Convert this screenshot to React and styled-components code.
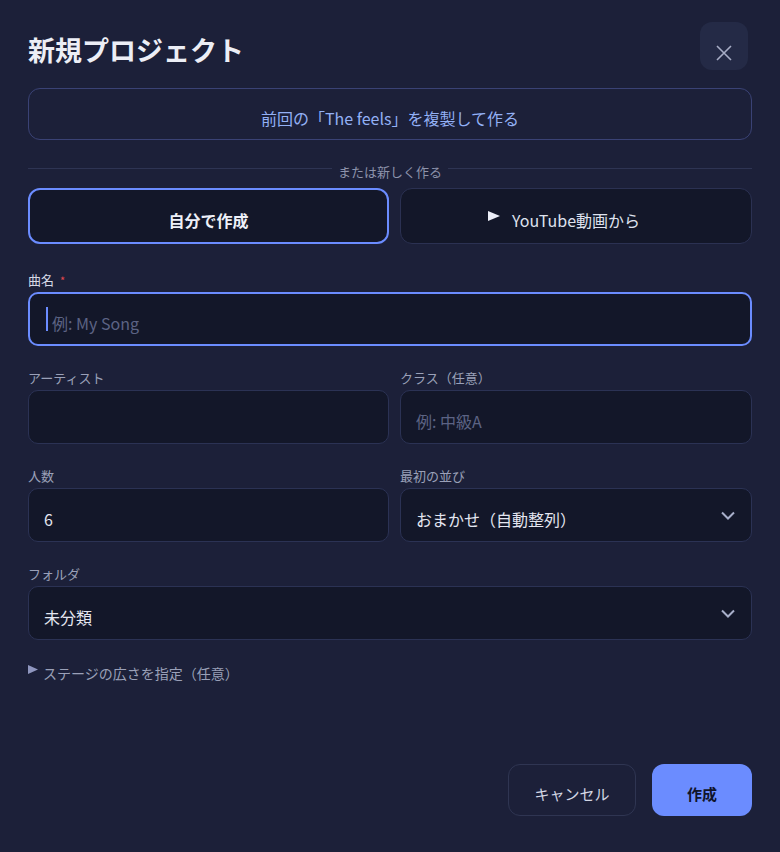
import React from 'react';
import styled, { createGlobalStyle } from 'styled-components';

const GlobalStyle = createGlobalStyle`
  * {
    box-sizing: border-box;
  }

  body {
    margin: 0;
    background: #1c2039;
    color: #e4e6f0;
    font-family: "Noto Sans CJK JP", "Noto Sans", sans-serif;
  }
`;

const Dialog = styled.div`
  display: flex;
  flex-direction: column;
  min-height: 100vh;
  padding: 22px 28px 36px;
`;

const Header = styled.header`
  align-items: flex-start;
  display: flex;
  justify-content: space-between;
`;

const Title = styled.h1`
  color: #eceef6;
  font-size: 27px;
  font-weight: 700;
  line-height: 34px;
  margin: 11px 0 0;
`;

const CloseButton = styled.button`
  align-items: center;
  background: #242a46;
  border: none;
  border-radius: 12px;
  color: #a7adc6;
  cursor: pointer;
  display: flex;
  height: 48px;
  justify-content: center;
  margin-right: 4px;
  padding: 13px 0 0;
  width: 48px;
`;

const CloneButton = styled.button`
  align-items: center;
  background: transparent;
  border: 1px solid #3a4275;
  border-radius: 12px;
  color: #93b0f5;
  cursor: pointer;
  display: flex;
  font-family: inherit;
  font-size: 16px;
  height: 52px;
  justify-content: center;
  margin-top: 18px;
  padding: 0;
  width: 100%;
`;

// text sits a few pixels under the middle of its box
const Shifted = styled.span`
  line-height: ${({ $lh }) => $lh || 20}px;
  padding-top: 8px;
`;

const Divider = styled.div`
  align-items: center;
  color: #8d93ab;
  display: flex;
  font-size: 13px;
  gap: 6px;
  margin-top: 15px;

  &::before,
  &::after {
    background: #2e3453;
    content: "";
    flex: 1;
    height: 1px;
  }
`;

const Columns = styled.div`
  column-gap: 11px;
  display: grid;
  grid-template-columns: 361fr 352fr;
`;

const ModeRow = styled(Columns)`
  margin-top: 7px;
`;

const ModeButton = styled.button`
  align-items: center;
  background: #131729;
  border: ${({ $active }) => ($active ? '2px solid #6b8cff' : '1px solid #2b3152')};
  border-radius: 12px;
  color: ${({ $active }) => ($active ? '#eef0f8' : '#dfe2ee')};
  cursor: pointer;
  display: flex;
  font-family: inherit;
  font-size: 16px;
  font-weight: ${({ $active }) => ($active ? 700 : 400)};
  gap: 12px;
  height: 56px;
  justify-content: center;
  padding: 0 ${({ $withIcon }) => ($withIcon ? 24 : 0)}px 0 0;
`;

const Form = styled.div`
  display: flex;
  flex-direction: column;
  gap: 23px;
  margin-top: 27px;
`;

const Field = styled.label`
  display: flex;
  flex-direction: column;
`;

const Label = styled.span`
  color: ${({ $strong }) => ($strong ? '#d6d9e6' : '#9aa0b8')};
  font-size: 13px;
  line-height: 18px;
  margin-bottom: 3px;
`;

const Required = styled.span`
  color: #e5484d;
  font-size: 11px;
  margin-left: 6px;
  vertical-align: top;
`;

const Input = styled.input`
  background: #131729;
  border: 1px solid #2b3254;
  border-radius: 10px;
  color: #e4e6f0;
  font-family: inherit;
  font-size: 16px;
  height: 54px;
  outline: none;
  padding: 8px 15px 0;
  width: 100%;

  &::placeholder {
    color: #5c6384;
  }
`;

const FocusBox = styled.div`
  align-items: center;
  background: #131729;
  border: 2px solid #6b8cff;
  border-radius: 10px;
  display: flex;
  height: 54px;
  padding: 0 16px;
`;

const Caret = styled.span`
  background: #6b8cff;
  height: 24px;
  margin-right: 4px;
  width: 2px;
`;

const Placeholder = styled(Shifted)`
  color: #5c6384;
  font-size: 16px;
`;

const Select = styled.div`
  align-items: center;
  background: #131729;
  border: 1px solid #2b3254;
  border-radius: 10px;
  color: #e4e6f0;
  display: flex;
  font-size: 16px;
  height: 54px;
  justify-content: space-between;
  padding: 0 16px 0 15px;
`;

const Details = styled.div`
  align-items: center;
  color: #9aa0b8;
  display: flex;
  font-size: 14px;
  gap: 5px;
  margin-top: -8px;
`;

const Footer = styled.footer`
  display: flex;
  gap: 16px;
  justify-content: flex-end;
  margin-top: auto;
`;

const FooterButton = styled.button`
  align-items: center;
  background: ${({ $primary }) => ($primary ? '#6b8cff' : 'transparent')};
  border: ${({ $primary }) => ($primary ? 'none' : '1px solid #2f3552')};
  border-radius: 12px;
  color: ${({ $primary }) => ($primary ? '#10142a' : '#d2d6e4')};
  cursor: pointer;
  display: flex;
  font-family: inherit;
  font-size: 15px;
  font-weight: ${({ $primary }) => ($primary ? 700 : 400)};
  height: 52px;
  justify-content: center;
  padding: 0;
  width: ${({ $primary }) => ($primary ? 100 : 128)}px;
`;

const CloseIcon = () => (
  <svg width="16" height="16" viewBox="0 0 16 16" fill="none">
    <path d="M1 1L15 15M15 1L1 15" stroke="currentColor" strokeWidth="1.6" />
  </svg>
);

const PlayIcon = ({ w = 12, h = 10, color = '#eceef8' }) => (
  <svg width={w} height={h} viewBox={`0 0 ${w} ${h}`}>
    <path d={`M0 0L${w} ${h / 2}L0 ${h}Z`} fill={color} />
  </svg>
);

const Chevron = () => (
  <svg width="14" height="9" viewBox="0 0 14 9" fill="none">
    <path d="M1 1.5L7 7.5L13 1.5" stroke="#a8afca" strokeWidth="2" />
  </svg>
);

const DropDown = ({ value }) => (
  <Select>
    <Shifted>{value}</Shifted>
    <Chevron />
  </Select>
);

export default function App() {
  return (
    <>
      <GlobalStyle />
      <Dialog>
        <Header>
          <Title>新規プロジェクト</Title>
          <CloseButton aria-label="閉じる">
            <CloseIcon />
          </CloseButton>
        </Header>

        <CloneButton>
          <Shifted>前回の「The feels」を複製して作る</Shifted>
        </CloneButton>

        <Divider>
          <Shifted $lh={18}>または新しく作る</Shifted>
        </Divider>

        <ModeRow>
          <ModeButton $active>
            <Shifted>自分で作成</Shifted>
          </ModeButton>
          <ModeButton $withIcon>
            <PlayIcon />
            <Shifted>YouTube動画から</Shifted>
          </ModeButton>
        </ModeRow>

        <Form>
          <Field>
            <Label $strong>
              曲名<Required>*</Required>
            </Label>
            <FocusBox>
              <Caret />
              <Placeholder>例: My Song</Placeholder>
            </FocusBox>
          </Field>

          <Columns>
            <Field>
              <Label>アーティスト</Label>
              <Input readOnly />
            </Field>
            <Field>
              <Label>クラス（任意）</Label>
              <Input readOnly placeholder="例: 中級A" />
            </Field>
          </Columns>

          <Columns>
            <Field>
              <Label>人数</Label>
              <Input readOnly value="6" />
            </Field>
            <Field>
              <Label>最初の並び</Label>
              <DropDown value="おまかせ（自動整列）" />
            </Field>
          </Columns>

          <Field>
            <Label>フォルダ</Label>
            <DropDown value="未分類" />
          </Field>

          <Details>
            <PlayIcon w={10} h={9} color="#8f96bf" />
            <Shifted>ステージの広さを指定（任意）</Shifted>
          </Details>
        </Form>

        <Footer>
          <FooterButton>
            <Shifted>キャンセル</Shifted>
          </FooterButton>
          <FooterButton $primary>
            <Shifted>作成</Shifted>
          </FooterButton>
        </Footer>
      </Dialog>
    </>
  );
}
